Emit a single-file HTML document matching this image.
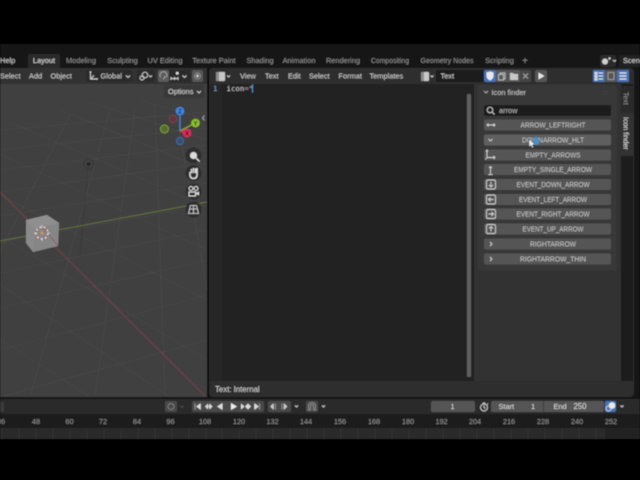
<!DOCTYPE html>
<html><head><meta charset="utf-8"><style>
html,body{margin:0;padding:0;background:#000;width:640px;height:480px;overflow:hidden}
svg{display:block}
text{font-family:"Liberation Sans",sans-serif;font-size:7.4px;fill:#c8c8c8}
.m{font-family:"DejaVu Sans Mono","Liberation Mono",monospace;font-size:7.4px}
.c{text-anchor:middle}
.d{fill:#909090}
.b{fill:#545454}
.i{fill:none;stroke:#d0d0d0;stroke-width:.9}
</style></head><body>
<svg width="640" height="480" viewBox="0 0 640 480" xmlns="http://www.w3.org/2000/svg">
<defs><filter id="s" x="0" y="0" width="100%" height="100%"><feGaussianBlur stdDeviation="0.4"/></filter>
<clipPath id="vp"><path d="M0 84H207V396H0Z"/></clipPath></defs>
<g filter="url(#s)">
<rect width="640" height="480" fill="#000"/>
<rect y="44" width="640" height="395" fill="#181818"/>

<!-- top bar -->
<text x="0" y="63" style="fill:#d0d0d0">Help</text>
<rect x="28" y="54" width="32" height="14" rx="2" fill="#2c2c2c"/>
<text x="44" y="63" class="c" style="fill:#e0e0e0">Layout</text>
<text x="81" y="63" class="c d">Modeling</text>
<text x="122.500" y="63" class="c d">Sculpting</text>
<text x="165" y="63" class="c d">UV Editing</text>
<text x="214" y="63" class="c d">Texture Paint</text>
<text x="260" y="63" class="c d">Shading</text>
<text x="299" y="63" class="c d">Animation</text>
<text x="343" y="63" class="c d">Rendering</text>
<text x="390" y="63" class="c d" textLength="38" lengthAdjust="spacingAndGlyphs">Compositing</text>
<text x="447" y="63" class="c d" textLength="53" lengthAdjust="spacingAndGlyphs">Geometry Nodes</text>
<text x="499.500" y="63" class="c d">Scripting</text>
<text x="525" y="64" class="c d" style="font-size:10px">+</text>
<rect x="600" y="55" width="16" height="12" rx="2" fill="#2a2a2a"/>
<circle cx="605" cy="61.500" r="3" fill="#d0d0d0"/><circle cx="609.500" cy="58.500" r="1.200" fill="#d0d0d0"/>
<path d="M613 60l1.500 1.500L616 60" class="i"/>
<rect x="619" y="55" width="21" height="12" fill="#202020"/>
<text x="623" y="63" style="fill:#d8d8d8">Scene</text>

<!-- 3D viewport -->
<rect x="0" y="68" width="207" height="329" fill="#3f3f3f"/>
<g clip-path="url(#vp)" stroke="#4c4c4c" stroke-width=".6" fill="none">
<path d="M0 130L207 112M0 150L207 128M0 170L207 145M0 192L207 163M0 216L207 183M0 243L207 205M0 273L207 230M0 308L207 260M0 350L207 295M0 397L207 340"/>
<path d="M60 110L207 170M10 122L207 207M-30 140L207 250M-60 165L207 300M-60 200L207 360M-60 245L170 397M-60 300L90 397M90 102L207 140M140 100L207 120"/>
<path d="M110 110L30 397M70 115L-40 330M135 110L95 397M155 105L165 397M175 105L207 290"/>
</g>
<g clip-path="url(#vp)" fill="none">
<path d="M0 192L206 397" stroke="#7c4249" stroke-width=".9"/>
<path d="M0 241L207 202" stroke="#66753e" stroke-width=".9"/>
<path d="M88 164L80 255" stroke="#333" stroke-width=".7" stroke-dasharray="1.500 1"/>
<circle cx="88.500" cy="164" r="5" stroke="#2e2e2e" stroke-width="1" stroke-dasharray="1 1"/>
<circle cx="88.500" cy="164" r="1.800" fill="#222"/>
</g>
<!-- cube -->
<path d="M26 220L47 215L59 223L58 246L33 252L26 243Z" fill="#8a8a8a"/>
<path d="M26 220L47 215L59 223L35 229Z" fill="#8f8f8f"/>
<path d="M35 229L59 223L58 246L33 252Z" fill="#868686"/>
<path d="M42 226L58 246" stroke="#8a5560" stroke-width=".7"/>
<circle cx="42" cy="233" r="6" fill="none" stroke="#e8e8e8" stroke-width="1" stroke-dasharray="2.500 1.700"/>
<circle cx="42" cy="233" r="6" fill="none" stroke="#b03a40" stroke-width="1" stroke-dasharray="1.700 2.500" stroke-dashoffset="-2.500"/>
<circle cx="42" cy="233" r="1.500" fill="#d89040"/>
<path d="M34 233H37M47 233H50M42 225V228M42 238V241" stroke="#ddd" stroke-width=".7"/>

<!-- viewport header -->
<rect x="0" y="68" width="207" height="16" fill="#333"/>
<text x="0" y="78.500" style="fill:#d0d0d0">Select</text>
<text x="29" y="78.500" style="fill:#d0d0d0">Add</text>
<text x="50.500" y="78.500" style="fill:#d0d0d0">Object</text>
<rect x="86" y="70" width="46" height="12" rx="2" fill="#2b2b2b"/>
<path d="M90.500 72V79H97M90.500 79L94 75.500" class="i"/><circle cx="90.500" cy="72" r=".9" fill="#d0d0d0"/><circle cx="97" cy="79" r=".9" fill="#d0d0d0"/>
<text x="100.500" y="78.500" style="fill:#d0d0d0">Global</text>
<path d="M126 75.500l2 2 2-2" class="i"/>
<rect x="137" y="70" width="18" height="12" rx="2" fill="#2b2b2b"/>
<circle cx="145" cy="75" r="2.800" class="i"/><circle cx="142" cy="78" r="2" class="i"/>
<path d="M149 75.500l1.500 1.500 1.500-1.500" class="i"/>
<rect x="158" y="70" width="11" height="12" rx="2" fill="#5b5b5b"/>
<path d="M160.500 77a3.500 3.500 0 1 1 6 0M163 79a3 3 0 0 0 2-3" class="i" style="stroke:#aaa"/>
<rect x="169" y="70" width="22" height="12" rx="2" fill="#2b2b2b"/>
<path d="M171 77V80M174.500 77V80M178 77V80M171 78.500H178" class="i"/><rect x="176" y="72" width="2.500" height="2.500" fill="#ddd"/>
<path d="M182.500 75.500l2 2 2-2" class="i"/>
<rect x="192" y="70" width="11" height="12" rx="2" fill="#575757"/>
<circle cx="197.500" cy="76" r="3" fill="none" stroke="#999" stroke-width=".8"/><circle cx="197.500" cy="76" r="1.200" fill="#ddd"/>
<rect x="164" y="85" width="40" height="13" rx="2" fill="#373737"/>
<text x="168" y="94" style="fill:#d8d8d8">Options</text>
<path d="M197 91l2 2 2-2" class="i"/>

<!-- gizmo -->
<path d="M204.500 115.500l-2 2.500 2 2.500" fill="none" stroke="#aaa" stroke-width=".9"/>
<path d="M180 111V131" stroke="#3f86d8" stroke-width="1.200"/>
<path d="M180 131L195 123" stroke="#86b42c" stroke-width="1.200"/>
<path d="M180 131L187 133" stroke="#d63a55" stroke-width="1.200"/>
<circle cx="173" cy="119" r="3.600" fill="#54393f" stroke="#8a3a48"/>
<circle cx="164.500" cy="129" r="4" fill="#566b35" stroke="#7ea22c"/>
<circle cx="180" cy="141" r="3.600" fill="#38506f" stroke="#3f6ea8"/>
<circle cx="180" cy="111" r="4.300" fill="#3f86e0"/><text x="180" y="113.500" class="c" style="font-size:6px;font-weight:bold;fill:#123">Z</text>
<circle cx="195.500" cy="123" r="4.300" fill="#8bc02a"/><text x="195.500" y="125.500" class="c" style="font-size:6px;font-weight:bold;fill:#232">Y</text>
<circle cx="187" cy="133" r="4.300" fill="#e02a5c"/><text x="187" y="135.500" class="c" style="font-size:6px;font-weight:bold;fill:#411">X</text>
<!-- nav buttons -->
<circle cx="193.500" cy="155.500" r="8" fill="#2d2d2d"/><circle cx="193.500" cy="155.500" r="3.500" fill="#ddd"/><path d="M196 158l3.500 3.500" stroke="#ddd" stroke-width="1.300"/>
<circle cx="193.500" cy="173" r="8" fill="#2d2d2d"/><path d="M190 172v3.500q.5 3 3.500 3t3.500-3v-7.500M193.500 168v5M191.500 169v4M195.500 168.500v4.500" fill="none" stroke="#ddd" stroke-width="1.500"/>
<circle cx="193.500" cy="191.500" r="8" fill="#2d2d2d"/><circle cx="191" cy="188.500" r="2" fill="none" stroke="#ddd"/><circle cx="196" cy="188.500" r="2" fill="none" stroke="#ddd"/><rect x="189" y="192" width="6.500" height="4" fill="none" stroke="#ddd"/><path d="M196 193l3-1.500v4l-3-1.500" fill="#ddd"/>
<circle cx="193.500" cy="209.500" r="8" fill="#2d2d2d"/><path d="M190.500 205.500h6l2 8h-10ZM193.500 205.500v8M189.500 209h8" fill="none" stroke="#ddd" stroke-width=".8"/>

<!-- text editor -->
<rect x="207" y="68" width="2" height="330" fill="#0f0f0f"/>
<rect x="209" y="68" width="425" height="329" rx="4" fill="#2e2e2e"/>
<rect x="209" y="84" width="265" height="297" fill="#232323"/>
<rect x="209" y="84" width="13" height="297" fill="#282828"/>
<rect x="216" y="72" width="9" height="9" rx="1" fill="#c8c8c8"/><rect x="216" y="72" width="3" height="9" fill="#8a8a8a"/>
<path d="M227 75.500l1.500 1.500 1.500-1.500" class="i"/>
<text x="240" y="78.500" style="fill:#d0d0d0">View</text>
<text x="265" y="78.500" style="fill:#d0d0d0">Text</text>
<text x="288" y="78.500" style="fill:#d0d0d0">Edit</text>
<text x="309" y="78.500" style="fill:#d0d0d0">Select</text>
<text x="338.500" y="78.500" style="fill:#d0d0d0">Format</text>
<text x="369.500" y="78.500" style="fill:#d0d0d0">Templates</text>
<rect x="417" y="70" width="15" height="12" rx="2" fill="#2d2d2d"/>
<rect x="421" y="72" width="8" height="9" rx="1" fill="#c8c8c8"/><rect x="421" y="72" width="3" height="9" fill="#8a8a8a"/>
<path d="M430.500 75.500l1.500 1.500 1.500-1.500" class="i"/>
<rect x="436" y="70" width="48" height="12" rx="2" fill="#1c1c1c"/>
<text x="440.500" y="78.500" style="fill:#d0d0d0">Text</text>
<rect x="484" y="70" width="12" height="12" rx="2" fill="#4772b3"/>
<path d="M486.500 72.500l3.500-1 3.500 1v3.500q0 3-3.500 4.500q-3.500-1.500-3.500-4.500Z" fill="#e8e8e8"/>
<rect x="496" y="70" width="12" height="12" fill="#545454"/>
<rect x="500" y="73" width="5" height="6" fill="none" stroke="#ccc" stroke-width=".8"/><rect x="498.500" y="74.500" width="5" height="5.500" fill="#545454" stroke="#ccc" stroke-width=".8"/>
<rect x="508" y="70" width="12" height="12" fill="#545454"/>
<path d="M510 73h3l1 1h4v6h-8Z" fill="#c8c8c8"/>
<rect x="520" y="70" width="11" height="12" rx="1" fill="#454545"/>
<path d="M523 73.500l5 5M528 73.500l-5 5" stroke="#aaa" stroke-width=".9"/>
<rect x="535" y="70" width="12" height="12" rx="2" fill="#545454"/>
<path d="M538.500 72.500v7l6-3.500Z" fill="#e8e8e8"/>
<rect x="593" y="70" width="12" height="12" rx="1" fill="#4772b3"/>
<path d="M595 72.500h2v1.500h-2ZM595 75.500h2v1.500h-2ZM595 78.500h2v1.500h-2ZM598.500 73h4.500M598.500 76h4.500M598.500 79h4.500" stroke="#e6e6e6" stroke-width=".9" fill="none"/>
<rect x="605" y="70" width="12" height="12" rx="1" fill="#545454"/>
<rect x="608" y="72.500" width="6" height="7" fill="none" stroke="#aaa" stroke-width=".8"/>
<rect x="617" y="70" width="12" height="12" rx="1" fill="#4772b3"/>
<path d="M619.500 73h7M619.500 76h7M619.500 79h7" stroke="#e6e6e6" stroke-width="1.300"/>
<text x="213" y="91" class="m" style="fill:#7fa3c8">1</text>
<text x="226.500" y="91" class="m" style="fill:#c8c8c8">icon<tspan style="fill:#b08a90">=</tspan><tspan style="fill:#b8a080">"</tspan></text>
<path d="M252.500 84.500v8" stroke="#4a90d8" stroke-width="1"/>
<!-- scrollbar -->
<rect x="467" y="94" width="4" height="283" rx="1" fill="#5e5e5e"/>
<text x="215" y="392" style="fill:#d4d4d4;font-size:7.800px">Text: Internal</text>
<rect x="474" y="84" width="147" height="297" fill="#313131"/>
<rect x="621" y="84" width="12" height="297" fill="#1d1d1d"/>

<!-- sidebar panel -->
<rect x="478" y="85" width="139" height="185.500" rx="3" fill="#383838"/>
<path d="M484 91l2 2 2-2" class="i" style="stroke:#aaa"/>
<text x="491.500" y="95" style="fill:#c8c8c8">Icon finder</text>
<text x="603" y="94" style="font-size:5px;fill:#5c5c5c">::::</text>
<rect x="484" y="105" width="127" height="11" rx="2" fill="#1a1a1a"/>
<circle cx="490" cy="110" r="2.800" class="i"/><path d="M492 112l2.500 2.500" class="i"/>
<text x="499" y="113" style="fill:#bbb">arrow</text>
<g>
<rect x="484" y="119.500" width="127" height="11" rx="2" class="b"/>
<rect x="484" y="134.500" width="127" height="11" rx="2" fill="#5e5e5e"/>
<rect x="484" y="149.500" width="127" height="11" rx="2" class="b"/>
<rect x="484" y="164" width="127" height="11" rx="2" class="b"/>
<rect x="484" y="179" width="127" height="11" rx="2" class="b"/>
<rect x="484" y="194" width="127" height="11" rx="2" class="b"/>
<rect x="484" y="208.500" width="127" height="11" rx="2" class="b"/>
<rect x="484" y="223.500" width="127" height="11" rx="2" class="b"/>
<rect x="484" y="238.500" width="127" height="11" rx="2" class="b"/>
<rect x="484" y="253.500" width="127" height="11" rx="2" class="b"/>
</g>
<g>
<text x="553" y="127.500" class="c" textLength="65" lengthAdjust="spacingAndGlyphs">ARROW_LEFTRIGHT</text>
<text x="553" y="142.500" class="c" textLength="62" lengthAdjust="spacingAndGlyphs">DOWNARROW_HLT</text>
<text x="553" y="157.500" class="c" textLength="55" lengthAdjust="spacingAndGlyphs">EMPTY_ARROWS</text>
<text x="553" y="172" class="c" textLength="78" lengthAdjust="spacingAndGlyphs">EMPTY_SINGLE_ARROW</text>
<text x="553" y="187" class="c" textLength="73" lengthAdjust="spacingAndGlyphs">EVENT_DOWN_ARROW</text>
<text x="553" y="202" class="c" textLength="68" lengthAdjust="spacingAndGlyphs">EVENT_LEFT_ARROW</text>
<text x="553" y="216.500" class="c" textLength="73" lengthAdjust="spacingAndGlyphs">EVENT_RIGHT_ARROW</text>
<text x="553" y="231.500" class="c" textLength="61" lengthAdjust="spacingAndGlyphs">EVENT_UP_ARROW</text>
<text x="553" y="246.500" class="c" textLength="46" lengthAdjust="spacingAndGlyphs">RIGHTARROW</text>
<text x="553" y="261.500" class="c" textLength="66" lengthAdjust="spacingAndGlyphs">RIGHTARROW_THIN</text>
</g>
<path d="M487 125h8M488.500 123.500l-1.500 1.500 1.500 1.500M493.500 123.500l1.500 1.500-1.500 1.500" class="i"/>
<path d="M488.500 139l2 2 2-2" class="i"/>
<path d="M487 157.500h8M487 157.500v-7M487 157.500l-1.500 2M486 151.500l1-1.500 1 1.500M493.500 156l1.500 1.500-1.500 1.500" class="i"/>
<path d="M490.500 166.500v7M489 168l1.500-1.500 1.500 1.500M488.500 174.500h4" class="i"/>
<rect x="486.500" y="180" width="9" height="9" rx="1.500" class="i"/><path d="M491 182v5M489 185l2 2 2-2" class="i"/>
<rect x="486.500" y="195" width="9" height="9" rx="1.500" class="i"/><path d="M488.500 199.500h5M490.500 197.500l-2 2 2 2" class="i"/>
<rect x="486.500" y="209.500" width="9" height="9" rx="1.500" class="i"/><path d="M488.500 214h5M491.500 212l2 2-2 2" class="i"/>
<rect x="486.500" y="224.500" width="9" height="9" rx="1.500" class="i"/><path d="M491 231.500v-5M489 228.500l2-2 2 2" class="i"/>
<path d="M490 242l2 2-2 2" class="i"/>
<path d="M490 257l2 2-2 2" class="i"/>
<!-- cursor -->
<circle cx="536" cy="141" r="4" fill="#4a90c8" opacity=".85"/>
<path d="M529 139v8l2-1.700 1.300 2.700 1.200-.6-1.200-2.600 2.500 0Z" fill="#eee" stroke="#111" stroke-width=".4"/>

<!-- sidebar tabs -->
<rect x="621" y="86" width="12" height="27" fill="#2a2a2a"/>
<rect x="621" y="113" width="13" height="43" fill="#313131"/>
<text transform="translate(623.500,92) rotate(90)" style="font-size:7px;fill:#8e8e8e">Text</text>
<text transform="translate(623.500,117) rotate(90)" style="font-size:7px;fill:#e0e0e0">Icon finder</text>

<!-- timeline -->
<rect x="0" y="397" width="640" height="2" fill="#151515"/>
<rect x="0" y="399" width="640" height="15" fill="#2c2c2c"/>
<rect x="0" y="414" width="640" height="14" fill="#1e1e1e"/>
<rect x="0" y="428" width="640" height="11" fill="#2a2a2a"/>
<g stroke="#363636" stroke-width=".7">
<path d="M2 428V439M19 428V439M36 428V439M53 428V439M70 428V439M87 428V439M104 428V439M121 428V439M138 428V439M155 428V439M172 428V439M189 428V439M206 428V439M222 428V439M239 428V439M256 428V439M273 428V439M290 428V439M307 428V439M324 428V439M341 428V439M358 428V439M375 428V439M392 428V439M409 428V439M426 428V439M443 428V439M460 428V439M477 428V439M494 428V439M511 428V439M528 428V439M545 428V439M562 428V439M579 428V439M596 428V439M605 428V439"/>
</g>
<rect x="605" y="428" width="35" height="11" fill="#232323"/>
<rect x="0" y="402" width="4" height="10" rx="1" fill="#3a3a3a"/>
<rect x="165" y="401" width="12" height="11" rx="2" fill="#4a4a4a"/>
<circle cx="171" cy="406.500" r="3" fill="none" stroke="#888" stroke-width=".8"/>
<path d="M180.500 406l1.500 1.500 1.500-1.500" fill="none" stroke="#555" stroke-width=".8"/>
<rect x="192" y="401" width="72" height="11" rx="2" fill="#4a4a4a"/>
<rect x="268" y="401" width="23" height="11" rx="2" fill="#4a4a4a"/>
<rect x="291" y="401" width="11" height="11" rx="2" fill="#2b2b2b"/>
<path d="M195 403.500v6M200.500 403.500v6l-4-3Z" fill="#ddd" stroke="#ddd" stroke-width=".5"/>
<path d="M205 406.500l3-3v6ZM212.500 406.500l-3-3v6Z" fill="#ddd"/><path d="M208 406.500l2.500-2.500v5Z" fill="#ddd"/>
<path d="M217 406.500l5.500-3.500v7Z" fill="#ddd"/>
<path d="M231 403v7l6-3.500Z" fill="#eee"/>
<path d="M241 403.500v6l3.500-3ZM245 406.500l3-3 3 3-3 3Z" fill="#ddd"/>
<path d="M254.500 403.500v6l4-3ZM259.500 403.500v6" fill="#ddd" stroke="#ddd" stroke-width=".5"/>
<path d="M273.500 403.500v6l-3-3ZM275.500 403.500v6" fill="#ccc" stroke="#ccc" stroke-width=".5"/>
<path d="M284 403.500v6l3-3ZM282 403.500v6" fill="#ccc" stroke="#ccc" stroke-width=".5"/>
<path d="M295 405.500l1.500 1.500 1.500-1.500" class="i"/>
<rect x="306" y="401" width="12" height="11" rx="2" fill="#4a4a4a"/>
<path d="M308.500 410v-4a3.500 3.500 0 0 1 7 0v4h-2v-4a1.500 1.500 0 0 0-3 0v4Z" fill="none" stroke="#999" stroke-width=".8"/>
<rect x="318" y="401" width="11" height="11" rx="2" fill="#2b2b2b"/>
<path d="M322 405.500l1.500 1.500 1.500-1.500" class="i"/>
<rect x="431" y="401" width="44" height="11" rx="2" fill="#545454"/>
<text x="452.500" y="409" class="c" style="fill:#ddd">1</text>
<circle cx="484" cy="407.500" r="3.500" class="i"/><path d="M484 405.500v2l1.500 1M483 403h2M487 404.500l1-1" class="i"/>
<rect x="491" y="401" width="113" height="11" rx="2" fill="#545454"/>
<rect x="543" y="401" width="1" height="11" fill="#3a3a3a"/>
<text x="498.500" y="409" style="fill:#ddd">Start</text>
<text x="533" y="409" class="c" style="fill:#ddd">1</text>
<text x="553.500" y="409" style="fill:#ddd">End</text>
<text x="580" y="409" class="c" style="fill:#ddd;font-size:7.800px">250</text>
<rect x="605" y="401" width="11" height="11" rx="2" fill="#4772b3"/>
<circle cx="612" cy="405.500" r="3.300" fill="#e8e8e8"/><circle cx="608.500" cy="408.500" r="2.500" fill="none" stroke="#e8e8e8" stroke-width=".7"/>
<rect x="616" y="401" width="13" height="11" rx="2" fill="#2b2b2b"/>
<path d="M620.500 405.500l1.500 1.500 1.500-1.500" class="i"/>
<g>
<text x="1" y="424" class="c d">36</text><text x="36" y="424" class="c d">48</text><text x="69.500" y="424" class="c d">60</text><text x="103" y="424" class="c d">72</text><text x="137" y="424" class="c d">84</text><text x="170.500" y="424" class="c d">96</text><text x="205" y="424" class="c d">108</text><text x="239" y="424" class="c d">120</text><text x="272.500" y="424" class="c d">132</text><text x="306" y="424" class="c d">144</text><text x="340" y="424" class="c d">156</text><text x="374" y="424" class="c d">168</text><text x="408" y="424" class="c d">180</text><text x="441.500" y="424" class="c d">192</text><text x="475" y="424" class="c d">204</text><text x="509" y="424" class="c d">216</text><text x="543" y="424" class="c d">228</text><text x="577" y="424" class="c d">240</text><text x="611" y="424" class="c d">252</text>
</g>
</g>
</svg>
</body></html>
